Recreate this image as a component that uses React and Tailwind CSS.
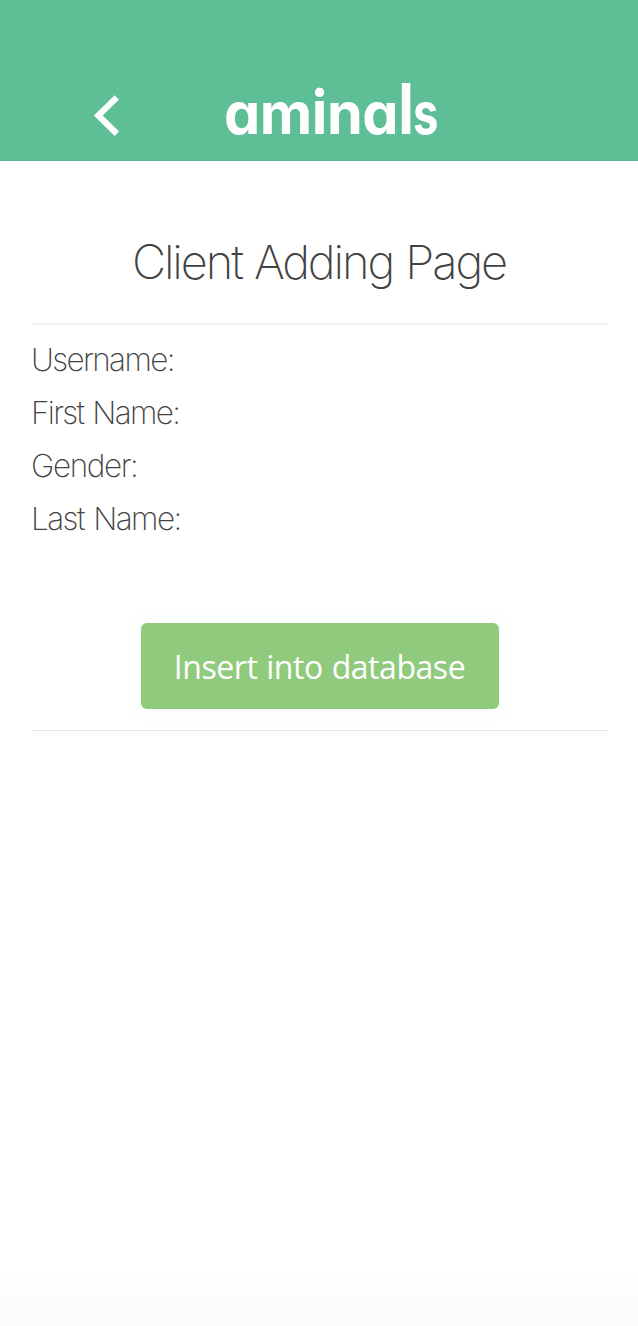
import React from "react";

const fields = [
  { label: "Username:", tracking: "tracking-[-1.65px]" },
  { label: "First Name:", tracking: "tracking-[-1.7px] [word-spacing:2px]" },
  { label: "Gender:", tracking: "tracking-[-1.4px]" },
  { label: "Last Name:", tracking: "tracking-[-1.55px] [word-spacing:2px]" },
];

export default function App() {
  return (
    <div className="flex h-[1326px] w-[638px] flex-col bg-gradient-to-b from-white from-[96%] to-[#fafafa] font-['Inter',sans-serif] text-[#424242]">
      <header className="flex h-[161px] shrink-0 items-start bg-[#5ebf97] text-white">
        <button aria-label="Back" className="mt-[94px] ml-[93px] h-[43px] w-[28px]">
          <svg viewBox="0 0 28 43" className="h-[43px] w-[28px]" fill="none" stroke="currentColor" strokeWidth="6.2">
            <path d="M23.8 3.4 5.3 21.5 23.8 39.8" />
          </svg>
        </button>
        <div className="mt-[73px] ml-[103px] text-[57.5px] leading-[80px] font-[650] tracking-[-0.45px] whitespace-nowrap [font-feature-settings:'cv11','ss07'_0]">
          am<span className="inline-block origin-[50%_76%] scale-y-[1.06]">i</span>na
          <span className="inline-block origin-[50%_76%] scale-y-[1.23]">l</span>
          <span className="inline-block origin-left scale-x-[0.79]">s</span>
        </div>
      </header>
      <main className="px-8 pr-[30px]">
        <div className="flex h-[164px] items-center justify-center border-b-2 border-[#f3f3f3] pt-[40px]">
          <h1 className="-ml-[2px] text-[47px] leading-[60px] font-[250] tracking-[-2.1px] whitespace-nowrap [word-spacing:1px]">Client Adding Page</h1>
        </div>
        <div className="-ml-px pt-[8px]">
          {fields.map((f) => (
            <div key={f.label} className={"h-[53px] text-[31.5px] leading-[53px] font-[250] " + f.tracking}>
              {f.label}
            </div>
          ))}
        </div>
        <div className="flex h-[186px] justify-center border-b border-[#e9e9e9] pt-[66px]">
          <div className="h-[111px] w-[383px] rounded-[22px] bg-[#fbfefd] p-[12px] pt-[12px] pr-[13px]">
            <button className="flex h-[86px] w-[358px] items-center justify-center rounded-[6px] bg-[#90ca7c] pt-[2px] font-['Open_Sans',sans-serif] text-[32px] font-[450] tracking-[-0.45px] whitespace-nowrap text-white [word-spacing:1px]">
              Insert into database
            </button>
          </div>
        </div>
      </main>
    </div>
  );
}
